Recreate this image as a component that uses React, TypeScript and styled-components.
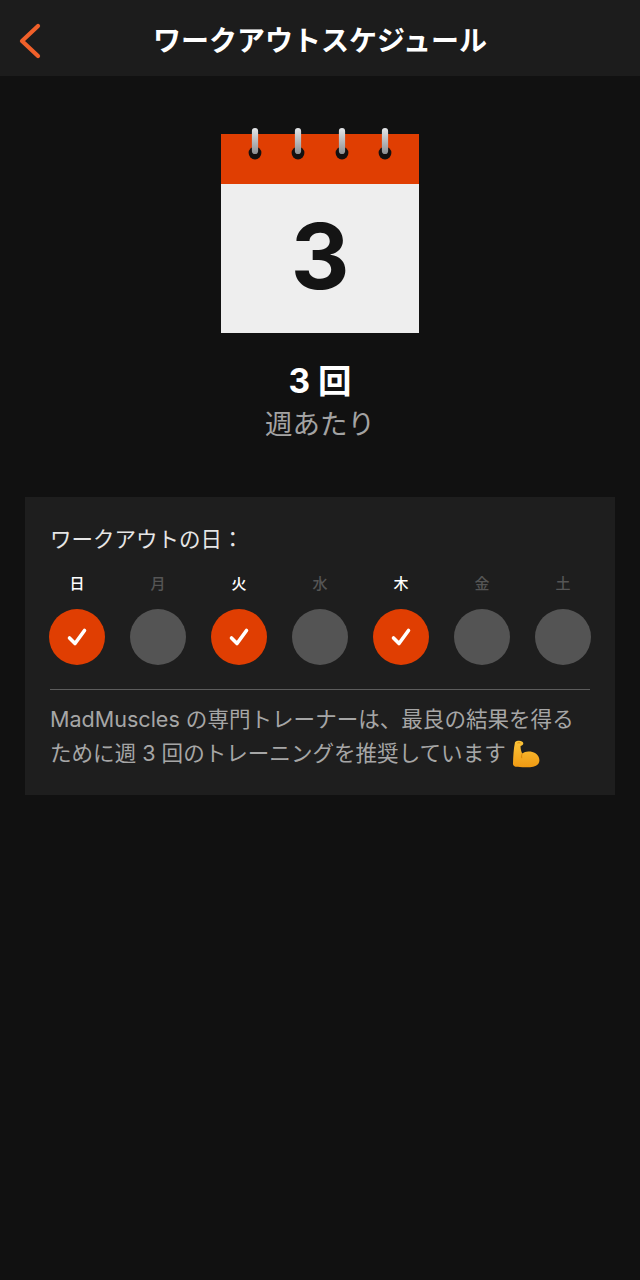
import styled, { createGlobalStyle } from "styled-components";

const JP_FONT = `Inter, "Noto Sans CJK JP", "Noto Sans", sans-serif`;

const days = [
  { label: "日", active: true },
  { label: "月", active: false },
  { label: "火", active: true },
  { label: "水", active: false },
  { label: "木", active: true },
  { label: "金", active: false },
  { label: "土", active: false },
];

function BackIcon() {
  return (
    <svg width="24" height="36" viewBox="0 0 24 36" fill="none">
      <path
        d="M19 3 L3 18 L19 33"
        stroke="#f0602a"
        strokeWidth="4.2"
        strokeLinecap="round"
        strokeLinejoin="round"
      />
    </svg>
  );
}

function CheckIcon() {
  return (
    <svg width="24" height="24" viewBox="0 0 24 24" fill="none">
      <path
        d="M4.5 13 L10 18.5 L19.5 5.5"
        stroke="#fff"
        strokeWidth="3.6"
        strokeLinecap="round"
        strokeLinejoin="round"
      />
    </svg>
  );
}

function RingIcon() {
  return (
    <svg width="14" height="34" viewBox="0 0 14 34">
      <defs>
        <linearGradient id="ring-metal" x1="0" y1="0" x2="0" y2="1">
          <stop offset="0" stopColor="#e4e6e8" />
          <stop offset="1" stopColor="#8d8f92" />
        </linearGradient>
      </defs>
      <circle cx="7" cy="26" r="6.4" fill="#141010" />
      <rect x="3.9" y="1" width="6.2" height="26" rx="3.1" fill="url(#ring-metal)" />
    </svg>
  );
}

function FlexIcon() {
  return (
    <svg width="28" height="28" viewBox="0 0 28 28">
      <defs>
        <linearGradient id="flex-skin" x1="0" y1="0" x2="0" y2="1">
          <stop offset="0" stopColor="#fcc53a" />
          <stop offset="1" stopColor="#f09a12" />
        </linearGradient>
      </defs>
      <path
        d="M3 2.2 C4.6 0.6 8 0.4 10 1.4 C11.2 2 11.6 3.4 11 4.4 C10.4 5.4 9.4 5.6 8.6 6 C8.4 8 9 11 10.2 13.4 C12.4 11.6 15.6 11 18.6 11.6 C23.4 12.4 27.2 15.6 27.4 20 C27.6 24.6 23.4 27 18 27.2 C12.4 27.4 6.6 27.2 3.6 26.8 C1.6 26.4 0.8 25 1 23 C1.2 17 1.6 8.6 3 2.2 Z"
        fill="url(#flex-skin)"
      />
      <path d="M10.2 13.4 C9.6 15 9.4 16.6 9.8 18.2" stroke="#d98608" strokeWidth="1" fill="none" />
      <path d="M5.4 3 C6.4 2.6 7.6 2.6 8.4 3" stroke="#d98608" strokeWidth="0.9" fill="none" />
    </svg>
  );
}

export default function App() {
  return (
    <Page>
      <GlobalStyle />
      <Header>
        <BackButton aria-label="戻る">
          <BackIcon />
        </BackButton>
        <HeaderTitle>ワークアウトスケジュール</HeaderTitle>
      </Header>

      <Hero>
        <Calendar>
          <Rings>
            <RingIcon />
            <RingIcon />
            <RingIcon />
            <RingIcon />
          </Rings>
          <CalendarTop />
          <CalendarBody>3</CalendarBody>
        </Calendar>
        <Count>3 回</Count>
        <CountLabel>週あたり</CountLabel>
      </Hero>

      <Card>
        <CardTitle>ワークアウトの日：</CardTitle>
        <DayGrid>
          {days.map((day) => (
            <Day key={day.label}>
              <DayLabel $active={day.active}>{day.label}</DayLabel>
              <DayCircle $active={day.active}>{day.active && <CheckIcon />}</DayCircle>
            </Day>
          ))}
        </DayGrid>
        <Divider />
        <Description>
          MadMuscles の専門トレーナーは、最良の結果を得るために週 3 回のトレーニングを推奨しています{" "}
          <FlexWrap>
            <FlexIcon />
          </FlexWrap>
        </Description>
      </Card>
    </Page>
  );
}

const GlobalStyle = createGlobalStyle`
  html, body {
    margin: 0;
    padding: 0;
    background: #111111;
  }
  * {
    box-sizing: border-box;
  }
`;

const Page = styled.div`
  width: 640px;
  height: 1280px;
  background: #111111;
  font-family: ${JP_FONT};
  overflow: hidden;
`;

const Header = styled.header`
  position: relative;
  height: 76px;
  padding-top: 7px;
  display: flex;
  align-items: center;
  justify-content: center;
  background: #1c1c1c;
`;

const BackButton = styled.button`
  position: absolute;
  left: 19px;
  top: 23px;
  padding: 0;
  border: 0;
  background: none;
  line-height: 0;
`;

const HeaderTitle = styled.h1`
  margin: 0;
  color: #ffffff;
  font-size: 28px;
  font-weight: 700;
  line-height: 1.2;
`;

const Hero = styled.section`
  display: flex;
  flex-direction: column;
  align-items: center;
  padding-top: 58px;
`;

const Calendar = styled.div`
  position: relative;
  width: 198px;
  height: 199px;
  display: flex;
  flex-direction: column;
`;

const Rings = styled.div`
  position: absolute;
  top: -7px;
  left: 27px;
  display: flex;
  gap: 29.3px;
  line-height: 0;
`;

const CalendarTop = styled.div`
  height: 50px;
  background: #e03e02;
`;

const CalendarBody = styled.div`
  flex: 1;
  padding-bottom: 5px;
  display: flex;
  align-items: center;
  justify-content: center;
  background: #eeeeee;
  color: #141414;
  font-family: Inter, sans-serif;
  font-size: 91px;
  font-weight: 700;
  line-height: 1;
`;

const Count = styled.div`
  margin-top: 26px;
  color: #ffffff;
  font-size: 33.5px;
  font-weight: 700;
  line-height: 44px;
`;

const CountLabel = styled.div`
  color: #a3a3a3;
  font-size: 27.5px;
  line-height: 42px;
`;

const Card = styled.section`
  margin: 52px 25px 0;
  padding: 25px 25px 24px;
  height: 298px;
  background: #1e1e1e;
`;

const CardTitle = styled.h2`
  margin: 0;
  color: #e6e6e6;
  font-size: 21.5px;
  font-weight: 400;
  line-height: 34px;
`;

const DayGrid = styled.div`
  margin: 17px -1px 0;
  display: flex;
  justify-content: space-between;
`;

const Day = styled.div`
  width: 56px;
  display: flex;
  flex-direction: column;
  align-items: center;
  gap: 14px;
`;

const DayLabel = styled.span<{ $active: boolean }>`
  color: ${({ $active }) => ($active ? "#ffffff" : "#555555")};
  font-size: 15px;
  font-weight: 500;
  line-height: 22px;
`;

const DayCircle = styled.div<{ $active: boolean }>`
  width: 56px;
  height: 56px;
  border-radius: 50%;
  display: flex;
  align-items: center;
  justify-content: center;
  background: ${({ $active }) => ($active ? "#e03e02" : "#545454")};
`;

const Divider = styled.div`
  margin-top: 24px;
  height: 1px;
  background: #5c5c5c;
`;

const Description = styled.p`
  margin: 12px 0 0;
  color: #a6a6a6;
  font-size: 21.55px;
  line-height: 34px;
`;

const FlexWrap = styled.span`
  display: inline-block;
  width: 28px;
  height: 28px;
  line-height: 0;
  vertical-align: -7px;
`;
